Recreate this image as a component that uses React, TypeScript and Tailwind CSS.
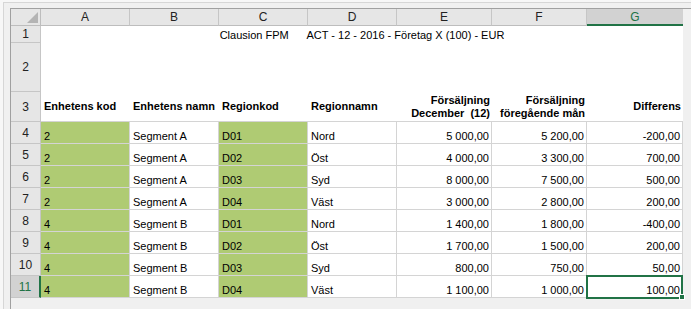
import * as React from "react";

const COLS = ["A", "B", "C", "D", "E", "F", "G"];

const DATA: string[][] = [
  ["2", "Segment A", "D01", "Nord", "5 000,00", "5 200,00", "-200,00"],
  ["2", "Segment A", "D02", "Öst", "4 000,00", "3 300,00", "700,00"],
  ["2", "Segment A", "D03", "Syd", "8 000,00", "7 500,00", "500,00"],
  ["2", "Segment A", "D04", "Väst", "3 000,00", "2 800,00", "200,00"],
  ["4", "Segment B", "D01", "Nord", "1 400,00", "1 800,00", "-400,00"],
  ["4", "Segment B", "D02", "Öst", "1 700,00", "1 500,00", "200,00"],
  ["4", "Segment B", "D03", "Syd", "800,00", "750,00", "50,00"],
  ["4", "Segment B", "D04", "Väst", "1 100,00", "1 000,00", "100,00"],
];

function RowHead({ n, active }: { n: number; active?: boolean }) {
  return (
    <div
      className={
        active
          ? "flex items-center justify-center border-b border-b-[#c6c6c6] border-r-2 border-r-[#217346] bg-[#d2d2d2] text-[12px] text-[#217346]"
          : "flex items-center justify-center border-b border-r border-[#c6c6c6] bg-[#e6e6e6] text-[12px] text-[#222]"
      }
    >
      {n}
    </div>
  );
}

export default function App() {
  return (
    <div className="w-[691px] h-[309px] overflow-hidden bg-[#f7f7f7] pt-[2px] pl-[3px] font-['Liberation_Sans',Arial,sans-serif] text-[11px] text-black">
      <div className="h-full border-t border-l border-[#d6d6d6] bg-[#f0f0f0] pt-[5px] pl-[6px]">
        <div className="h-full border-t border-l border-[#a0a0a0]">
          <div className="grid w-[672px] grid-cols-[30px_89px_89px_89px_89px_95px_95px_96px] grid-rows-[17px_17px_49px_30px_repeat(8,22px)] bg-white">
            {/* corner */}
            <div className="relative border-b border-r border-[#bdbdbd] bg-[#e6e6e6]">
              <svg className="absolute bottom-[2px] right-[2px]" width="11" height="11" viewBox="0 0 11 11">
                <polygon points="11,0 11,11 0,11" fill="#b4b4b4" />
              </svg>
            </div>
            {COLS.map((c) =>
              c === "G" ? (
                <div
                  key={c}
                  className="flex items-center justify-center border-b-2 border-b-[#217346] bg-[#d2d2d2] text-[12px] text-[#217346]"
                >
                  {c}
                </div>
              ) : (
                <div
                  key={c}
                  className="flex items-center justify-center border-b border-r border-b-[#bdbdbd] border-r-[#c6c6c6] bg-[#e6e6e6] text-[12px] text-[#222]"
                >
                  {c}
                </div>
              )
            )}

            {/* row 1 */}
            <RowHead n={1} />
            <div className="col-span-7 flex items-center justify-center whitespace-pre pt-[1px]">
              {"Clausion FPM      ACT - 12 - 2016 - Företag X (100) - EUR"}
            </div>

            {/* row 2 */}
            <RowHead n={2} />
            <div className="col-span-7" />

            {/* row 3 */}
            <RowHead n={3} />
            <div className="flex items-center border-b border-[#d4d4d4] pl-[3px] font-bold">Enhetens kod</div>
            <div className="flex items-center border-b border-[#d4d4d4] pl-[3px] font-bold">Enhetens namn</div>
            <div className="flex items-center border-b border-[#d4d4d4] pl-[3px] font-bold">Regionkod</div>
            <div className="flex items-center border-b border-[#d4d4d4] pl-[3px] font-bold">Regionnamn</div>
            <div className="flex items-center justify-end whitespace-pre border-b border-[#d4d4d4] pr-[2px] text-right font-bold leading-[13px]">
              {"Försäljning\nDecember  (12)"}
            </div>
            <div className="flex items-center justify-end whitespace-pre border-b border-[#d4d4d4] pr-[2px] text-right font-bold leading-[13px]">
              {"Försäljning\nföregående mån"}
            </div>
            <div className="flex items-center justify-end border-b border-[#d4d4d4] pr-[2px] font-bold">Differens</div>

            {/* data rows */}
            {DATA.map((r, i) => {
              const last = i === DATA.length - 1;
              return (
                <React.Fragment key={i}>
                  <RowHead n={i + 4} active={last} />
                  {r.map((v, j) => {
                    const green = j === 0 || j === 2;
                    const num = j >= 4;
                    return (
                      <div
                        key={j}
                        className={
                          "relative flex items-end whitespace-nowrap border-b border-r border-[#d4d4d4] leading-[13px] " +
                          (green ? "bg-[#afcb73] " : "bg-white ") +
                          (num ? "justify-end pr-[2px]" : "pl-[3px]")
                        }
                      >
                        {v}
                        {last && j === 6 && (
                          <>
                            <div className="absolute left-[-1px] top-[-1px] h-[24px] w-[97px] border-2 border-[#217346]" />
                            <div className="absolute bottom-[-3px] right-[-3px] h-[6px] w-[6px] border border-white bg-[#217346]" />
                          </>
                        )}
                      </div>
                    );
                  })}
                </React.Fragment>
              );
            })}
          </div>
        </div>
      </div>
    </div>
  );
}
